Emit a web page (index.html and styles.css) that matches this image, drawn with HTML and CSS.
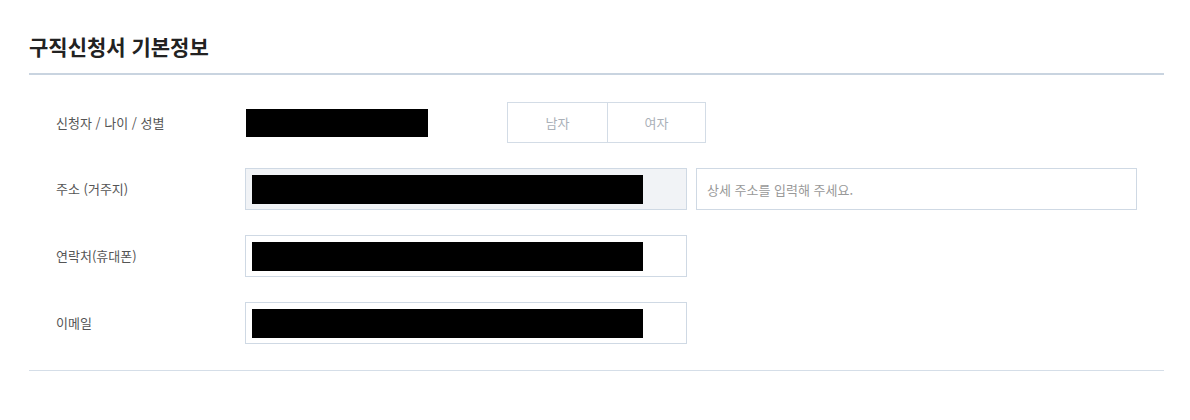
FILE: index.html
```html
<!DOCTYPE html>
<html lang="ko">
<head>
<meta charset="utf-8">
<title>구직신청서 기본정보</title>
<link rel="stylesheet" href="styles.css">
</head>
<body>
<section class="section">
  <h2 class="title">구직신청서 기본정보</h2>
  <div class="form">
    <div class="row">
      <div class="label">신청자 / 나이 / 성별</div>
      <div class="field">
        <div class="redact redact-name"></div>
        <div class="gender">
          <button class="gender-btn" type="button">남자</button>
          <button class="gender-btn" type="button">여자</button>
        </div>
      </div>
    </div>
    <div class="row">
      <div class="label">주소 (거주지)</div>
      <div class="field">
        <div class="input input-disabled"><div class="redact redact-input"></div></div>
        <div class="input input-detail"><span class="placeholder">상세 주소를 입력해 주세요.</span></div>
      </div>
    </div>
    <div class="row">
      <div class="label">연락처(휴대폰)</div>
      <div class="field">
        <div class="input"><div class="redact redact-input"></div></div>
      </div>
    </div>
    <div class="row">
      <div class="label">이메일</div>
      <div class="field">
        <div class="input"><div class="redact redact-input"></div></div>
      </div>
    </div>
  </div>
</section>
</body>
</html>
```

FILE: styles.css
```css
* { box-sizing: border-box; }

body {
  margin: 0;
  background: #ffffff;
  font-family: "Noto Sans CJK KR", "Noto Sans", sans-serif;
  color: #333;
}

.section {
  padding: 30px 26px 0 29px;
}

.title {
  margin: 0;
  padding-bottom: 11px;
  font-size: 21px;
  line-height: 32px;
  font-weight: 700;
  color: #222;
  border-bottom: 2px solid #c9d4e0;
}

.form {
  display: flex;
  flex-direction: column;
  gap: 25px;
  padding: 27px 0 26px;
  border-bottom: 1px solid #d5dee8;
}

.row {
  display: grid;
  grid-template-columns: 216px 1fr;
  align-items: center;
}

.label {
  padding-left: 27px;
  font-size: 13px;
  line-height: 20px;
  color: #555;
}

.field {
  display: flex;
  align-items: center;
}

.redact {
  background: #000;
}

.redact-name {
  width: 182px;
  height: 28px;
  margin-left: 1px;
}

.gender {
  display: flex;
  margin-left: 79px;
  border: 1px solid #d3dce6;
}

.gender-btn {
  width: 99px;
  height: 39px;
  padding: 0;
  border: 0;
  background: #fff;
  font-family: inherit;
  font-size: 13px;
  color: #aab0b8;
}

.gender-btn + .gender-btn {
  border-left: 1px solid #d3dce6;
  width: 98px;
}

.input {
  display: flex;
  align-items: center;
  width: 442px;
  height: 42px;
  padding: 0 6px;
  border: 1px solid #cfd9e4;
  background: #fff;
}

.input-disabled {
  background: #f1f3f6;
}

.redact-input {
  width: 391px;
  height: 29px;
}

.input-detail {
  width: 441px;
  margin-left: 9px;
  padding-left: 10px;
}

.placeholder {
  font-size: 13px;
  color: #999;
}
```
